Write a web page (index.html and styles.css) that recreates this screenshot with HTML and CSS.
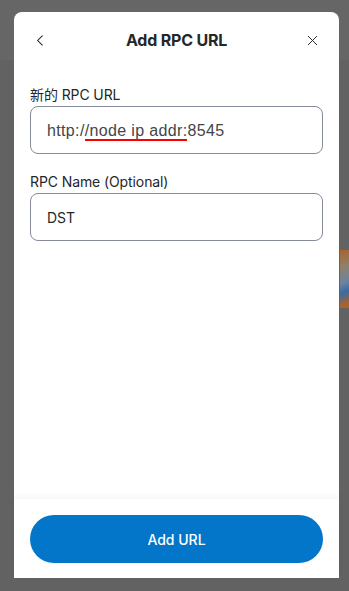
FILE: index.html
```html
<!DOCTYPE html>
<html lang="en">
<head>
  <meta charset="UTF-8" />
  <meta name="viewport" content="width=device-width, initial-scale=1.0"/>
  <title>Add RPC URL</title>
  <link rel="stylesheet" href="styles.css">
</head>
<body>
  <!-- page behind the overlay -->
  <div class="bg-art"></div>

  <div class="modal">
    <div class="modal-header">
      <button class="icon-btn" aria-label="Back">
        <svg width="16" height="16" viewBox="0 0 16 16"><path d="M10.5 2 4.5 8l6 6" fill="none" stroke="#24272a" stroke-width="1.3"/></svg>
      </button>
      <h1>Add RPC URL</h1>
      <button class="icon-btn" aria-label="Close">
        <svg width="16" height="16" viewBox="0 0 16 16"><path d="M2.5 2.5l11 11M13.5 2.5l-11 11" fill="none" stroke="#24272a" stroke-width="1.2"/></svg>
      </button>
    </div>

    <div class="modal-body">
      <label class="field-label">新的 RPC URL</label>
      <div class="text-input url-input">http:/<span class="spell">/node ip addr:</span>8545</div>

      <label class="field-label second">RPC Name (Optional)</label>
      <div class="text-input name-input">DST</div>
    </div>

    <div class="modal-footer">
      <button class="primary-btn">Add URL</button>
    </div>
  </div>
</body>
</html>
```

FILE: styles.css
```css
html, body {
  margin: 0;
  height: 100%;
}
body {
  font-family: Inter, "Noto Sans CJK SC", sans-serif;
  background: linear-gradient(#666666 0, #666666 60px, #626262 60px);
  padding: 12px 0 0 14px;
  box-sizing: border-box;
  overflow: hidden;
  position: relative;
}
.bg-art {
  position: absolute;
  left: 340px;
  top: 250px;
  width: 12px;
  height: 58px;
  background: linear-gradient(160deg, #b8641e 0, #9a8a70 30%, #6d8bb0 55%, #2f6db6 70%, #b8641e 90%);
  opacity: 0.8;
}
.modal {
  position: relative;
  width: 325px;
  height: 566px;
  background: #fff;
  border-radius: 8px 8px 0 0;
  display: flex;
  flex-direction: column;
}
.modal-header {
  display: flex;
  align-items: center;
  justify-content: space-between;
  padding: 16px 20px 16px 20px;
}
.modal-header h1 {
  margin: 0;
  font-size: 16px;
  line-height: 24px;
  font-weight: 700;
  color: #24272a;
  letter-spacing: -0.2px;
}
.icon-btn {
  background: none;
  border: none;
  padding: 0;
  width: 13px;
  height: 13px;
  display: flex;
}
.icon-btn svg {
  width: 13px;
  height: 13px;
}
.modal-body {
  flex: 1;
  padding: 16px 16px 0 16px;
  display: flex;
  flex-direction: column;
}
.field-label {
  font-size: 14px;
  line-height: 22px;
  color: #24272a;
  letter-spacing: -0.1px;
}
.field-label.second {
  margin-top: 17px;
}
.text-input {
  height: 46px;
  border: 1px solid #858b9a;
  border-radius: 8px;
  padding: 0 16px;
  display: flex;
  align-items: center;
}
.url-input {
  font-family: "Liberation Sans", Arial, sans-serif;
  font-size: 16px;
  letter-spacing: 0.35px;
  color: #454545;
  padding-top: 2px;
  box-sizing: border-box;
  height: 48px;
  white-space: pre;
}
.name-input {
  font-size: 14px;
  color: #24272a;
}
.spell {
  padding-bottom: 1px;
  background: linear-gradient(#ff0000, #ff0000) left bottom / 100% 2px no-repeat;
}
.modal-footer {
  padding: 16px 16px 15px 16px;
  box-shadow: 0 -3px 6px rgba(0, 0, 0, 0.04);
}
.primary-btn {
  width: 100%;
  height: 48px;
  border: none;
  border-radius: 24px;
  background: #0376c9;
  color: #fff;
  font-family: Inter, sans-serif;
  font-size: 14px;
  font-weight: 500;
}
```
